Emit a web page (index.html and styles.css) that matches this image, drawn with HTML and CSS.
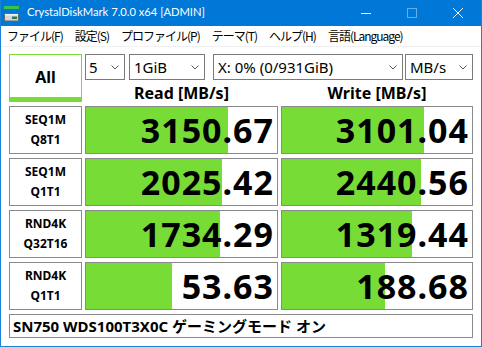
FILE: index.html
```html
<!DOCTYPE html>
<html lang="ja">
<head>
    <meta charset="UTF-8">
    <title>CrystalDiskMark 7.0.0 x64 [ADMIN]</title>
    <link rel="stylesheet" href="styles.css">
</head>
<body>
    <div class="window">
        <!-- タイトルバー -->
        <div class="titlebar">
            <svg class="app-icon" width="16" height="18" viewBox="0 0 16 18">
                <rect x="0" y="2" width="15" height="3" fill="#39c24c"/>
                <rect x="1" y="5" width="14" height="1" fill="#1f8a36"/>
                <rect x="0.5" y="9.5" width="14" height="7.5" rx="1" fill="#d6d6d6" stroke="#666"/>
                <rect x="1" y="10" width="13" height="1.5" fill="#f2f2f2"/>
                <rect x="8" y="12.5" width="5" height="2.5" fill="#2b7a57"/>
            </svg>
            <span class="title">CrystalDiskMark 7.0.0 x64 [ADMIN]</span>
            <div class="controls">
                <span class="ctl">
                    <svg width="10" height="10" viewBox="0 0 10 10"><line x1="0" y1="5.5" x2="10" y2="5.5" stroke="#fff"/></svg>
                </span>
                <span class="ctl">
                    <svg width="10" height="10" viewBox="0 0 10 10"><rect x="0.5" y="0.5" width="9" height="9" fill="none" stroke="rgba(255,255,255,0.4)"/></svg>
                </span>
                <span class="ctl">
                    <svg width="10" height="10" viewBox="0 0 10 10"><path d="M0 0L10 10M10 0L0 10" stroke="#fff" stroke-width="1"/></svg>
                </span>
            </div>
        </div>

        <!-- メニュー -->
        <div class="menubar">
            <span>ファイル(F)</span>
            <span>設定(S)</span>
            <span>プロファイル(P)</span>
            <span>テーマ(T)</span>
            <span>ヘルプ(H)</span>
            <span>言語(Language)</span>
        </div>

        <div class="main">
            <div class="all-btn">All</div>

            <div class="top-right">
                <div class="selects">
                    <div class="select s-count"><span>5</span><svg width="8" height="5" viewBox="0 0 8 5"><polyline points="0.5,0.5 4,4 7.5,0.5" fill="none" stroke="#555"/></svg></div>
                    <div class="select s-size"><span>1GiB</span><svg width="8" height="5" viewBox="0 0 8 5"><polyline points="0.5,0.5 4,4 7.5,0.5" fill="none" stroke="#555"/></svg></div>
                    <div class="select s-drive"><span>X: 0% (0/931GiB)</span><svg width="8" height="5" viewBox="0 0 8 5"><polyline points="0.5,0.5 4,4 7.5,0.5" fill="none" stroke="#555"/></svg></div>
                    <div class="select s-unit"><span>MB/s</span><svg width="8" height="5" viewBox="0 0 8 5"><polyline points="0.5,0.5 4,4 7.5,0.5" fill="none" stroke="#555"/></svg></div>
                </div>
                <div class="heads">
                    <div>Read [MB/s]</div>
                    <div>Write [MB/s]</div>
                </div>
            </div>

            <div class="label">SEQ1M<br>Q8T1</div>
            <div class="value" style="--w: 74.3%">3150.67</div>
            <div class="value" style="--w: 74.7%">3101.04</div>

            <div class="label">SEQ1M<br>Q1T1</div>
            <div class="value" style="--w: 71.2%">2025.42</div>
            <div class="value" style="--w: 73.2%">2440.56</div>

            <div class="label">RND4K<br>Q32T16</div>
            <div class="value" style="--w: 70.2%">1734.29</div>
            <div class="value" style="--w: 68.4%">1319.44</div>

            <div class="label">RND4K<br>Q1T1</div>
            <div class="value" style="--w: 45%">53.63</div>
            <div class="value" style="--w: 54.2%">188.68</div>

            <div class="footer">SN750 WDS100T3X0C ゲーミングモード オン</div>
        </div>
    </div>
</body>
</html>
```

FILE: styles.css
```css
body {
    margin: 0;
    font-family: "Noto Sans", "Noto Sans CJK JP", sans-serif;
    color: #000;
}

/* ウィンドウ枠 */
.window {
    width: 482px;
    height: 347px;
    box-sizing: border-box;
    border: 1px solid #1883d7;
    border-top: none;
    background: #fff;
}

.titlebar {
    height: 26px;
    background: #0078d7;
    color: #fff;
    display: flex;
    align-items: center;
    padding-left: 3px;
}

.app-icon {
    margin-right: 7px;
}

.title {
    font-family: "Lato", sans-serif;
    font-size: 11.2px;
    line-height: 24px;
    align-self: flex-start;
}

.controls {
    margin-left: auto;
    display: flex;
    height: 100%;
}

.ctl {
    width: 46px;
    display: flex;
    align-items: center;
    justify-content: center;
}

/* メニュー */
.menubar {
    height: 20px;
    display: flex;
    gap: 12px;
    padding-left: 6px;
    font-family: "Noto Sans CJK JP", sans-serif;
    font-size: 12px;
    line-height: 20px;
    letter-spacing: -1px;
    border-bottom: 1px solid #f0f0f0;
}

/* メイン部分 */
.main {
    padding: 7px 0 0 8px;
    display: grid;
    grid-template-columns: 73px 193px 192px;
    grid-template-rows: 48px repeat(4, 48px) 24px;
    column-gap: 3px;
    row-gap: 4px;
}

.all-btn {
    box-sizing: border-box;
    border: 1px solid #78dc37;
    border-bottom-width: 5px;
    display: flex;
    align-items: center;
    justify-content: center;
    font-size: 16px;
    font-weight: bold;
    padding-top: 1px;
}

.top-right {
    grid-column: 2 / 4;
    display: flex;
    flex-direction: column;
}

.selects {
    display: flex;
    height: 26px;
}

.select {
    box-sizing: border-box;
    border: 1px solid #7a7a7a;
    display: flex;
    align-items: center;
    justify-content: space-between;
    padding: 0 5px 0 4px;
    font-size: 15px;
    line-height: 24px;
}

.select svg {
    margin-top: 1px;
}

.s-count { width: 40px; padding-left: 3px; }
.s-size { width: 76px; margin-left: 4px; }
.s-drive { width: 190px; margin-left: 8px; }
.s-unit { width: 68px; margin-left: 2px; }

.heads {
    display: grid;
    grid-template-columns: 193px 192px;
    column-gap: 3px;
    height: 22px;
    line-height: 27px;
    font-size: 16px;
    font-weight: bold;
    text-align: center;
}

.label {
    box-sizing: border-box;
    border: 1px solid #8a8a8a;
    display: flex;
    align-items: center;
    justify-content: center;
    text-align: center;
    font-size: 12px;
    font-weight: bold;
    line-height: 20px;
}

.value {
    box-sizing: border-box;
    border: 1px solid #8a8a8a;
    background: linear-gradient(to right, #78dc37 var(--w), #fff var(--w));
    text-align: right;
    padding-right: 3px;
    font-size: 34px;
    font-weight: bold;
    letter-spacing: 1px;
    line-height: 46px;
}

.footer {
    grid-column: 1 / 4;
    box-sizing: border-box;
    border: 1px solid #8a8a8a;
    padding-left: 3px;
    font-size: 15px;
    font-weight: bold;
    line-height: 22px;
}
```
